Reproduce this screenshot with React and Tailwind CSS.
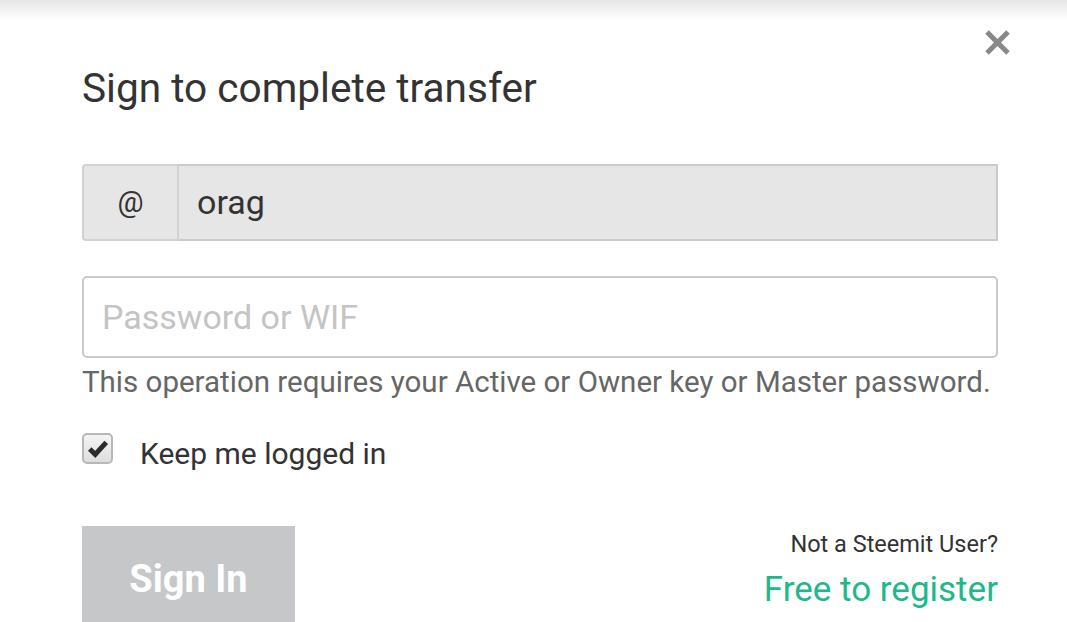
import React from 'react'

const font = { fontFamily: 'Roboto, "Liberation Sans", sans-serif' }

export default function App() {
  return (
    <div className="relative w-[1067px] h-[622px] overflow-hidden bg-white text-[#333]" style={font}>
      <div className="absolute inset-x-0 top-0 h-[20px] bg-gradient-to-b from-[#e6e6e6] to-white" />

      <button className="absolute left-[984px] top-[29px] w-[27px] h-[27px] text-[#888]">
        <svg viewBox="0 0 27 27" className="w-full h-full">
          <path d="M3 3 L24 24 M24 3 L3 24" stroke="currentColor" strokeWidth="5" />
        </svg>
      </button>

      <div className="pl-[82px] pr-[69px] pt-[64px]">
        <h2 className="text-[40.6px] leading-[48px] font-normal">Sign to complete transfer</h2>

        <div className="mt-[52px] flex h-[77px]">
          <div className="w-[97px] flex items-center justify-center bg-[#e6e6e6] border-2 border-[#d2d2d2] rounded-l-[4px] text-[29px]">@</div>
          <div className="flex-1 flex items-center pl-[18px] bg-[#e6e6e6] border-2 border-l-0 border-[#cacaca] text-[34px] text-[#333]">orag</div>
        </div>

        <div className="mt-[35px] h-[82px] flex items-center pl-[18px] border-2 border-[#cacaca] rounded-[5px] text-[34px] text-[#c4c4c4]">
          Password or WIF
        </div>
        <p className="mt-[6px] text-[29.5px] leading-[36px] text-[#666]">
          This operation requires your Active or Owner key or Master password.
        </p>

        <div className="mt-[33px] flex items-start">
          <div className="w-[31px] h-[31px] rounded-[5px] border-2 border-[#b8b8b8] bg-gradient-to-b from-[#f4f4f4] to-[#dedede] flex items-center justify-center">
            <svg viewBox="0 0 20 20" className="w-[22px] h-[22px]">
              <path d="M2.5 10 L7.5 15 L17.5 4" fill="none" stroke="#2b2b2b" strokeWidth="4.5" strokeLinejoin="miter" />
            </svg>
          </div>
          <span className="ml-[27px] mt-[3px] text-[30px] leading-[36px] text-[#333]">Keep me logged in</span>
        </div>

        <div className="mt-[54px] flex justify-between items-start">
          <div className="w-[213px] h-[120px] bg-[#c6c7c9] text-white font-bold text-[38px] leading-[45px] flex justify-center pt-[31px]">
            Sign In
          </div>
          <div className="text-right pt-[4px]">
            <div className="text-[23.5px] leading-[28px] text-[#333]">Not a Steemit User?</div>
            <div className="mt-[11px] text-[35px] leading-[42px] text-[#1fb88a]">Free to register</div>
          </div>
        </div>
      </div>
    </div>
  )
}
